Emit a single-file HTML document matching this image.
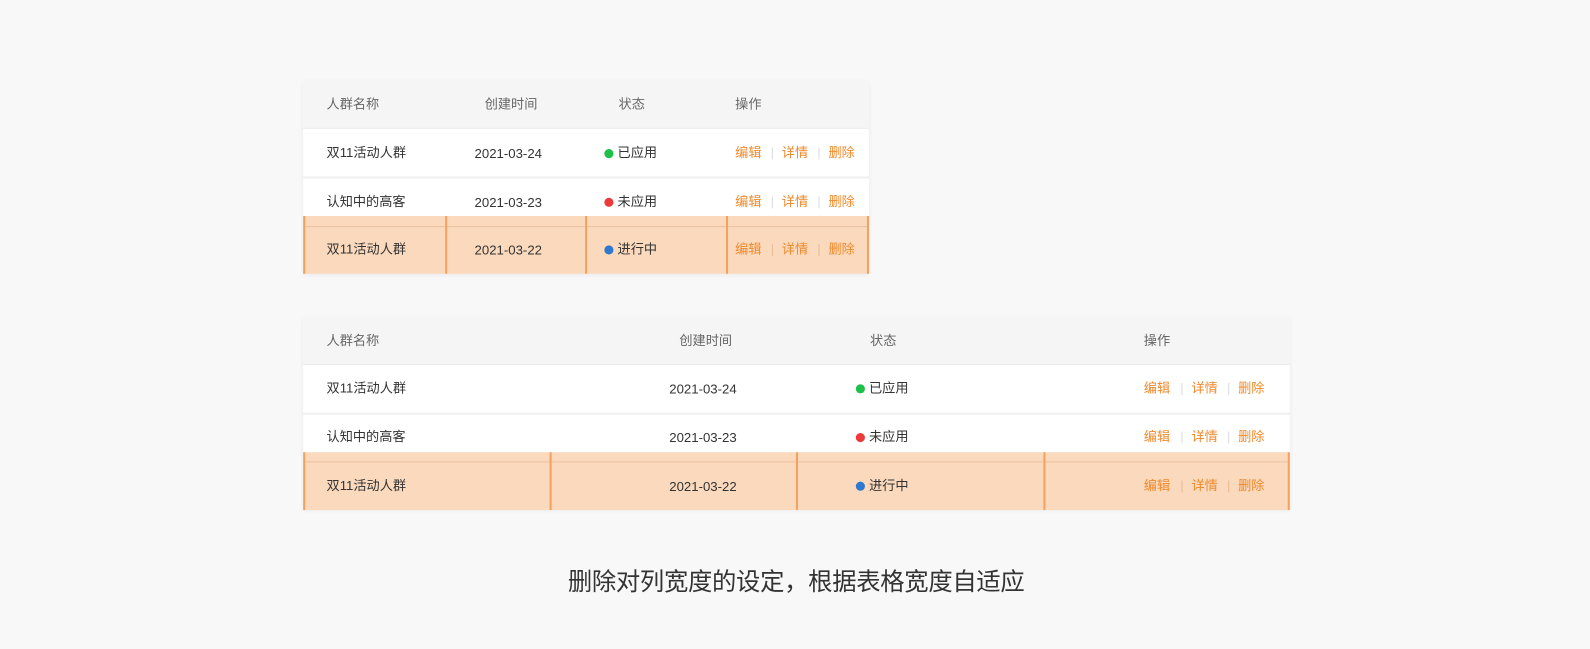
<!DOCTYPE html>
<html><head><meta charset="utf-8"><style>
*{margin:0;padding:0;box-sizing:border-box}
body{width:1590px;height:649px;background:#f8f8f8;position:relative;overflow:hidden;font-family:"Liberation Sans","Noto Sans CJK SC",sans-serif;font-size:13px;color:#333}
#w{position:absolute;left:0;top:0;width:1568px;height:640px;transform:scale(1.014);transform-origin:0 0}
.t{position:absolute;background:#fff;box-shadow:0 1px 4px rgba(0,0,0,0.06)}
.hd{position:absolute;left:0;right:0;top:0;height:47px;background:#f5f5f5;border-bottom:1px solid #ececec}
.sep{position:absolute;left:0;right:0;height:2px;background:#efefef}
.s{position:absolute;line-height:16px;white-space:nowrap}
.h{color:#666}
.o{color:#ef8a2c}
.bar{color:#ddd}
.bo{color:#e9bd98}
.dot{position:absolute;width:9px;height:9px;border-radius:50%}
.ov{position:absolute;background:rgba(249,210,178,0.85);border-left:2px solid #f3a160;border-right:2px solid #f3a160}
.vl{position:absolute;top:0;bottom:0;width:2px;background:#f3a160}
.rl{position:absolute;left:0;right:0;height:1px;background:rgba(220,170,130,0.5)}
.cap{position:absolute;left:560px;top:561px;font-size:24px;letter-spacing:-0.3px;color:#333;line-height:28px;white-space:nowrap}
</style></head><body><div id="w">

<div class="t" style="left:299px;top:80px;width:558px;height:190px">
 <div class="hd"></div>
 <div class="sep" style="top:94px"></div>
</div>
<div class="s h" style="left:322px;top:95px">人群名称</div>
<div class="s h" style="left:478px;top:95px">创建时间</div>
<div class="s h" style="left:610px;top:95px">状态</div>
<div class="s h" style="left:725px;top:95px">操作</div>

<div class="s" style="left:322px;top:143px">双11活动人群</div>
<div class="s" style="left:468px;top:144px">2021-03-24</div>
<div class="dot" style="left:596px;top:147px;background:#1ec04a"></div>
<div class="s" style="left:609px;top:143px">已应用</div>

<div class="s" style="left:322px;top:191px">认知中的高客</div>
<div class="s" style="left:468px;top:192px">2021-03-23</div>
<div class="dot" style="left:596px;top:195px;background:#ec3a3a"></div>
<div class="s" style="left:609px;top:191px">未应用</div>

<div class="ov" style="left:299px;top:213px;width:558px;height:57px">
 <div class="rl" style="top:10px"></div>
 <div class="vl" style="left:138px"></div>
 <div class="vl" style="left:276px"></div>
 <div class="vl" style="left:415px"></div>
</div>
<div class="s" style="left:322px;top:238px">双11活动人群</div>
<div class="s" style="left:468px;top:239px">2021-03-22</div>
<div class="dot" style="left:596px;top:242px;background:#2f78d0"></div>
<div class="s" style="left:609px;top:238px">进行中</div>

<div class="s o" style="left:725px;top:143px">编辑</div><div class="s bar" style="left:760px;top:143px">|</div><div class="s o" style="left:771px;top:143px">详情</div><div class="s bar" style="left:806px;top:143px">|</div><div class="s o" style="left:817px;top:143px">删除</div>
<div class="s o" style="left:725px;top:191px">编辑</div><div class="s bar" style="left:760px;top:191px">|</div><div class="s o" style="left:771px;top:191px">详情</div><div class="s bar" style="left:806px;top:191px">|</div><div class="s o" style="left:817px;top:191px">删除</div>
<div class="s o" style="left:725px;top:238px">编辑</div><div class="s bo" style="left:760px;top:238px">|</div><div class="s o" style="left:771px;top:238px">详情</div><div class="s bo" style="left:806px;top:238px">|</div><div class="s o" style="left:817px;top:238px">删除</div>

<div class="t" style="left:299px;top:313px;width:973px;height:190px">
 <div class="hd"></div>
 <div class="sep" style="top:94px"></div>
</div>
<div class="s h" style="left:322px;top:328px">人群名称</div>
<div class="s h" style="left:670px;top:328px">创建时间</div>
<div class="s h" style="left:858px;top:328px">状态</div>
<div class="s h" style="left:1128px;top:328px">操作</div>

<div class="s" style="left:322px;top:375px">双11活动人群</div>
<div class="s" style="left:660px;top:376px">2021-03-24</div>
<div class="dot" style="left:844px;top:379px;background:#1ec04a"></div>
<div class="s" style="left:857px;top:375px">已应用</div>

<div class="s" style="left:322px;top:423px">认知中的高客</div>
<div class="s" style="left:660px;top:424px">2021-03-23</div>
<div class="dot" style="left:844px;top:427px;background:#ec3a3a"></div>
<div class="s" style="left:857px;top:423px">未应用</div>

<div class="ov" style="left:299px;top:446px;width:973px;height:57px">
 <div class="rl" style="top:9px"></div>
 <div class="vl" style="left:241px"></div>
 <div class="vl" style="left:484px"></div>
 <div class="vl" style="left:728px"></div>
</div>
<div class="s" style="left:322px;top:471px">双11活动人群</div>
<div class="s" style="left:660px;top:472px">2021-03-22</div>
<div class="dot" style="left:844px;top:475px;background:#2f78d0"></div>
<div class="s" style="left:857px;top:471px">进行中</div>

<div class="s o" style="left:1128px;top:375px">编辑</div><div class="s bar" style="left:1164px;top:375px">|</div><div class="s o" style="left:1175px;top:375px">详情</div><div class="s bar" style="left:1210px;top:375px">|</div><div class="s o" style="left:1221px;top:375px">删除</div>
<div class="s o" style="left:1128px;top:423px">编辑</div><div class="s bar" style="left:1164px;top:423px">|</div><div class="s o" style="left:1175px;top:423px">详情</div><div class="s bar" style="left:1210px;top:423px">|</div><div class="s o" style="left:1221px;top:423px">删除</div>
<div class="s o" style="left:1128px;top:471px">编辑</div><div class="s bo" style="left:1164px;top:471px">|</div><div class="s o" style="left:1175px;top:471px">详情</div><div class="s bo" style="left:1210px;top:471px">|</div><div class="s o" style="left:1221px;top:471px">删除</div>

<div class="cap">删除对列宽度的设定，根据表格宽度自适应</div>
</div></body></html>
